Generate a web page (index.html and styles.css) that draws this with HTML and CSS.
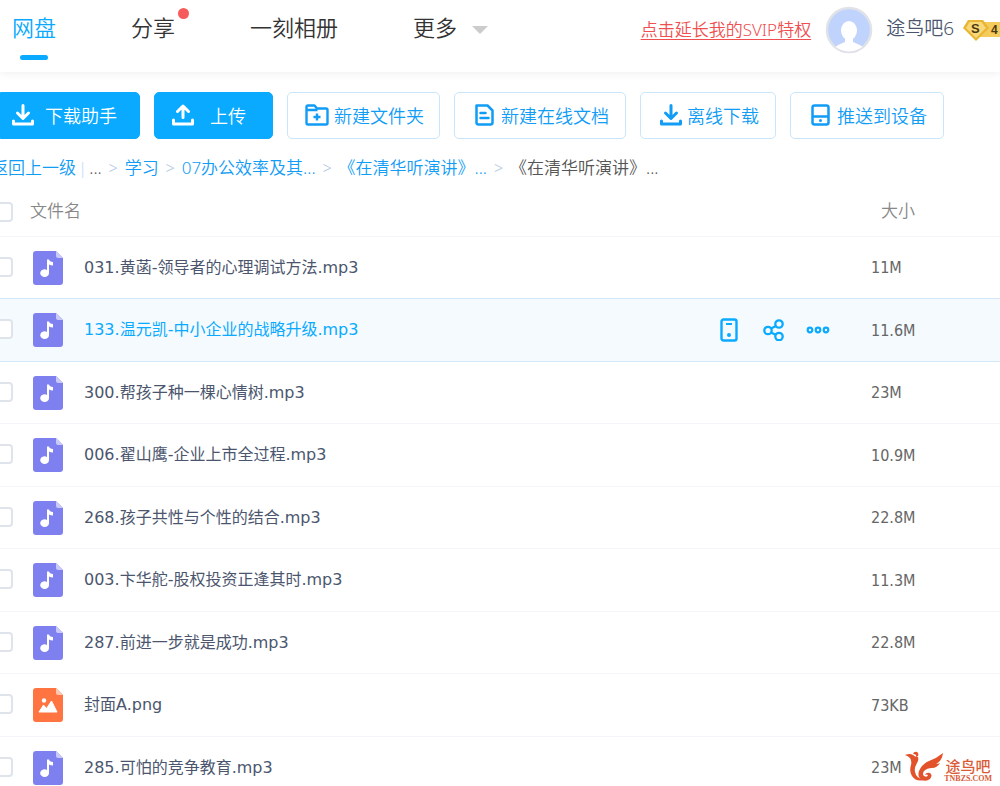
FILE: index.html
```html
<!DOCTYPE html>
<html lang="zh-CN">
<head>
<meta charset="utf-8">
<title>网盘</title>
<link rel="stylesheet" href="styles.css">
</head>
<body>
<svg class="defs" aria-hidden="true">
  <symbol id="music" viewBox="0 0 30 34">
    <path d="M3 0H23L30 7V31a3 3 0 0 1-3 3H3a3 3 0 0 1-3-3V3a3 3 0 0 1 3-3Z" fill="#7f80f0"/>
    <path d="M23 0l7 7h-5a2 2 0 0 1-2-2Z" fill="#c9c9fa"/>
    <path d="M14 8.500h2q.5 2 4 2.500v3.500q-2.500 0-4-1V22a4.400 3.800 0 1 1-2-3Z" fill="#fff"/>
  </symbol>
  <symbol id="picture" viewBox="0 0 30 34">
    <path d="M3 0H23L30 7V31a3 3 0 0 1-3 3H3a3 3 0 0 1-3-3V3a3 3 0 0 1 3-3Z" fill="#ff7440"/>
    <path d="M23 0l7 7h-5a2 2 0 0 1-2-2Z" fill="#ffc6b0"/>
    <circle cx="11" cy="12.500" r="2.200" fill="#fff"/>
    <path d="M6 24l4.500-7 3 3.500L18.500 13 24 24Z" fill="#fff" stroke="#fff" stroke-linejoin="round"/>
  </symbol>
  <symbol id="download" viewBox="0 0 22 22">
    <path d="M11 1.500V14M5.500 9l5.500 5.500L16.500 9M1.500 17v3h19v-3" fill="none" stroke="currentColor" stroke-width="3" stroke-linecap="round" stroke-linejoin="round"/>
  </symbol>
</svg>
<header class="topbar">
  <nav class="nav">
    <a class="nav-item current" href="#">网盘</a>
    <a class="nav-item share" href="#">分享<span class="dot"></span></a>
    <a class="nav-item album" href="#">一刻相册</a>
    <a class="nav-item more" href="#">更多<span class="caret"></span></a>
  </nav>
  <div class="account">
    <a class="svip" href="#">点击延长我的SVIP特权</a>
    <svg class="avatar" viewBox="0 0 48 48" aria-hidden="true">
      <defs><clipPath id="face"><circle cx="24" cy="24" r="21.500"/></clipPath></defs>
      <circle cx="24" cy="24" r="22" fill="#bfd3fc" stroke="#dfe2e8" stroke-width="2.500"/>
      <g clip-path="url(#face)" fill="#fff">
        <ellipse cx="24" cy="24.500" rx="8" ry="9.500"/>
        <path d="M20 30v6q-6 2-11 6v6h30v-6q-5-4-11-6v-6Z"/>
      </g>
    </svg>
    <span class="user">途鸟吧6</span>
    <svg class="badge" viewBox="0 0 38 24" aria-hidden="true">
      <path d="M15 4h23v15H15Z" fill="#f5cb5c"/>
      <path d="M6 2h15l6 8-13 13L1 10Z" fill="#e9b534"/>
      <path d="M7.500 4h12l4.500 6-10 10L4 10Z" fill="#f8d878"/>
      <text x="9" y="15" class="badge-s">S</text>
      <text x="29" y="16" class="badge-n">4</text>
    </svg>
  </div>
</header>
<main>
  <div class="toolbar">
    <button class="btn solid helper"><svg class="ico"><use href="#download"/></svg>下载助手</button>
    <button class="btn solid upload"><svg class="ico" viewBox="0 0 22 22"><path d="M11 13.500V3M5.500 7.500L11 2l5.500 5.500M1.500 16v4h19v-4" fill="none" stroke="currentColor" stroke-width="3" stroke-linecap="round" stroke-linejoin="round"/></svg>上传</button>
    <button class="btn"><svg class="ico wide" viewBox="0 0 24 22"><path d="M1.500 18V3q0-1.500 1.500-1.500h6.500L12 4.500h9q1.500 0 1.500 1.500v13q0 1.500-1.500 1.500H3q-1.500 0-1.500-1.500ZM1.500 6h11M12 9.500v7M8.500 13h7" fill="none" stroke="currentColor" stroke-width="2.400" stroke-linejoin="round"/></svg>新建文件夹</button>
    <button class="btn doc"><svg class="ico narrow" viewBox="0 0 19 22"><path d="M1.500 1.500h11l5 5v12q0 2-2 2h-12q-2 0-2-2ZM5.500 9h5M5.500 14h8" fill="none" stroke="currentColor" stroke-width="2.500" stroke-linejoin="round" stroke-linecap="round"/></svg>新建在线文档</button>
    <button class="btn offline"><svg class="ico"><use href="#download"/></svg>离线下载</button>
    <button class="btn doc"><svg class="ico narrow" viewBox="0 0 19 22"><path d="M3.500 1.500h12q2 0 2 2v15q0 2-2 2h-12q-2 0-2-2v-15q0-2 2-2ZM1.500 12.500h16" fill="none" stroke="currentColor" stroke-width="2.500"/><circle cx="9.500" cy="16.500" r="1.500" fill="currentColor"/></svg>推送到设备</button>
  </div>
  <nav class="crumbs" aria-label="路径">
    <a class="back" href="#">返回上一级</a><span class="bar">|</span><span class="ell">...</span><span class="sep">&gt;</span><a href="#">学习</a><span class="sep">&gt;</span><a href="#">07办公效率及其...</a><span class="sep">&gt;</span><a href="#">《在清华听演讲》...</a><span class="sep">&gt;</span><span class="here">《在清华听演讲》...</span>
  </nav>
  <table class="files">
    <thead>
      <tr><th class="pick"><input type="checkbox" aria-label="全选"></th><th class="title">文件名</th><th class="size">大小</th></tr>
    </thead>
    <tbody>
      <tr><td class="pick"><input type="checkbox" id="f1"></td><td><div class="file"><svg class="type"><use href="#music"/></svg><label for="f1">031.黄菡-领导者的心理调试方法.mp3</label></div></td><td class="size">11M</td></tr>
      <tr class="active"><td class="pick"><input type="checkbox" id="f2"></td><td><div class="file"><svg class="type"><use href="#music"/></svg><label for="f2">133.温元凯-中小企业的战略升级.mp3</label>
        <div class="actions">
          <button class="act" aria-label="推送到设备"><svg width="18" height="24" viewBox="0 0 18 24"><rect x="1.500" y="1.500" width="15" height="21" rx="2" fill="none" stroke="currentColor" stroke-width="2.400"/><path d="M6 6h6" stroke="currentColor" stroke-width="2"/><circle cx="9" cy="17" r="2" fill="currentColor"/></svg></button>
          <button class="act" aria-label="分享"><svg width="22" height="22" viewBox="0 0 22 22" fill="none" stroke="currentColor" stroke-width="2.300"><circle cx="5" cy="11.500" r="3.700"/><circle cx="16" cy="5" r="3.700"/><circle cx="16" cy="17.500" r="3.700"/><path d="M8 9.500l5-2.500M8 13.500l5 2.500"/></svg></button>
          <button class="act" aria-label="更多"><svg width="24" height="8" viewBox="0 0 24 8" fill="none" stroke="currentColor" stroke-width="2.200"><circle cx="4" cy="4" r="2.300"/><circle cx="12" cy="4" r="2.300"/><circle cx="20" cy="4" r="2.300"/></svg></button>
        </div></div></td><td class="size">11.6M</td></tr>
      <tr><td class="pick"><input type="checkbox" id="f3"></td><td><div class="file"><svg class="type"><use href="#music"/></svg><label for="f3">300.帮孩子种一棵心情树.mp3</label></div></td><td class="size">23M</td></tr>
      <tr><td class="pick"><input type="checkbox" id="f4"></td><td><div class="file"><svg class="type"><use href="#music"/></svg><label for="f4">006.翟山鹰-企业上市全过程.mp3</label></div></td><td class="size">10.9M</td></tr>
      <tr><td class="pick"><input type="checkbox" id="f5"></td><td><div class="file"><svg class="type"><use href="#music"/></svg><label for="f5">268.孩子共性与个性的结合.mp3</label></div></td><td class="size">22.8M</td></tr>
      <tr><td class="pick"><input type="checkbox" id="f6"></td><td><div class="file"><svg class="type"><use href="#music"/></svg><label for="f6">003.卞华舵-股权投资正逢其时.mp3</label></div></td><td class="size">11.3M</td></tr>
      <tr><td class="pick"><input type="checkbox" id="f7"></td><td><div class="file"><svg class="type"><use href="#music"/></svg><label for="f7">287.前进一步就是成功.mp3</label></div></td><td class="size">22.8M</td></tr>
      <tr><td class="pick"><input type="checkbox" id="f8"></td><td><div class="file"><svg class="type"><use href="#picture"/></svg><label for="f8">封面A.png</label></div></td><td class="size">73KB</td></tr>
      <tr><td class="pick"><input type="checkbox" id="f9"></td><td><div class="file"><svg class="type"><use href="#music"/></svg><label for="f9">285.可怕的竞争教育.mp3</label></div></td><td class="size">23M</td></tr>
    </tbody>
  </table>
</main>
<div class="mark">
  <svg width="40" height="32" viewBox="0 0 40 32" aria-hidden="true" fill="#e2522b">
    <path d="M1 4q5-2 8 0 2 2 5 2 1 3-1 6-3 5-2 9 1 6 9 8-8 2-12-4-3-5-1-11 1-4-1-7-2-2-5-3Z"/>
    <path d="M9 3q1-3 4-2 2 1 1 4l-2 1q1-3-3-3Z"/>
    <path d="M39 2q-1 8-7 11 2 0 4-1-3 5-8 5-5 0-8 3-2 3 0 5 3 2 4-1-1-1-3 0 1-3 5-2 3 2 0 6-4 3-8 1-5-3-3-9 3-7 10-10 8-3 14-8Z"/>
  </svg>
  <div class="mark-text"><span class="mark-name">途鸟吧</span><span class="mark-url">TNBZS.COM</span></div>
</div>
</body>
</html>
```
FILE: styles.css
```css
* { box-sizing: border-box; }
body {
  margin: 0;
  height: 100vh;
  overflow: hidden;
  position: relative;
  background: #fff;
  color: #4b566e;
  font-family: "Noto Sans", "Noto Sans CJK SC", sans-serif;
  font-size: 16px;
  font-weight: 350;
}
a { color: inherit; text-decoration: none; }
button { font: inherit; cursor: pointer; }
.defs { display: none; }

.topbar {
  display: flex;
  justify-content: space-between;
  height: 72px;
  box-shadow: 0 2px 8px rgba(0, 0, 0, 0.06);
  white-space: nowrap;
}
.nav { display: flex; padding-left: 12px; font-size: 22px; line-height: 55px; color: #333; }
.nav-item { position: relative; margin-right: 75px; }
.current { color: #09aaff; }
.current::after {
  content: "";
  position: absolute;
  left: 8px;
  top: 55px;
  width: 28px;
  height: 5px;
  border-radius: 3px;
  background: #09aaff;
}
.dot {
  position: absolute;
  top: 8px;
  right: -14px;
  width: 11px;
  height: 11px;
  border-radius: 50%;
  background: #f75c5c;
}
.more { display: flex; align-items: center; height: 54px; gap: 15px; margin-right: 0; }
.caret { border: 8px solid transparent; border-top-color: #ccc; border-bottom-width: 0; margin-top: 6px; }
.account { display: flex; align-items: center; height: 60px; }
.svip { color: #ef4f50; font-size: 17px; margin-bottom: 4px; text-decoration: underline; text-underline-offset: 3px; }
.avatar { width: 48px; height: 48px; margin: 0 13px 0 14px; }
.user { font-size: 19px; line-height: 56px; margin-bottom: 4px; }
.badge { width: 38px; height: 24px; margin-left: 8px; }
.badge-s { font: bold 13px "Liberation Sans", sans-serif; fill: #4c3a10; }
.badge-n { font: bold 12px "Liberation Sans", sans-serif; fill: #4c3a10; }

.toolbar { display: flex; gap: 14px; padding-top: 20px; }
.btn {
  display: flex;
  align-items: center;
  gap: 5px;
  height: 47px;
  padding: 0 15px 2px 17px;
  border: 1px solid #c9e6fb;
  border-radius: 5px;
  background: #fff;
  color: #119cf5;
  font-size: 18px;
  white-space: nowrap;
}
.solid { background: #09aaff; border-color: #09aaff; color: #fff; }
.helper { border-radius: 0 5px 5px 0; padding: 0 22px 2px 11px; gap: 11px; }
.upload { padding: 0 26px 2px 17px; gap: 16px; }
.doc, .offline { padding-left: 20px; padding-right: 16px; }
.doc { gap: 7px; }
.offline { padding-left: 19px; }
.ico { width: 22px; height: 22px; flex: none; }
.wide { width: 24px; }
.narrow { width: 19px; }

.crumbs {
  display: flex;
  height: 58px;
  line-height: 58px;
  margin-left: -9px;
  color: #119cf5;
  font-size: 17px;
  white-space: nowrap;
}
.bar { color: #c4dbfe; margin: 0 2px; }
.ell, .here { color: #555; }
.sep { width: 23px; text-align: center; color: #b4cbe4; font-size: 16px; }

.files { width: 100%; border-collapse: separate; border-spacing: 0; table-layout: fixed; }
th { height: 39px; padding: 0 0 14px; text-align: left; font-weight: 350; color: #888; font-size: 17px; }
th.pick { padding-bottom: 9px; }
th.size { padding-left: 10px; }
th.pick, td.pick { width: 30px; }
td { height: 62px; padding: 0; border-top: 1px solid #f3f5f9; }
tr:nth-child(even) td { height: 63px; }
td.pick { padding-bottom: 2px; }
.size { width: 129px; color: #666; font-family: "DejaVu Sans Condensed", "Noto Sans CJK SC", sans-serif; }
th.size { color: #888; }
input[type="checkbox"] {
  appearance: none;
  display: block;
  width: 20px;
  height: 20px;
  margin: 0 0 0 -7px;
  border: 2px solid #dfe3ec;
  border-radius: 4px;
  background: #fff;
}
.file { display: flex; align-items: center; padding-left: 3px; font-family: "DejaVu Sans", "Noto Sans CJK SC", sans-serif; font-weight: 400; }
.file label { line-height: 24px; }
.type { width: 30px; height: 34px; margin-right: 21px; }
.active td { background: #f4fafe; }
.active td, .active + tr td { border-top-color: #d3e8fa; }
.active label { color: #09aaff; }
.actions { display: flex; align-items: center; margin-left: auto; margin-right: 41px; gap: 25px; }
.act { display: flex; align-items: center; padding: 0; border: 0; background: none; color: #09aaff; }
.act + .act + .act { margin-left: -4px; }

.mark { position: absolute; right: 8px; bottom: 3px; display: flex; align-items: flex-end; color: #d95a36; }
.mark-text { display: flex; flex-direction: column; align-items: center; }
.mark-name { font-size: 15px; line-height: 16px; font-weight: 500; }
.mark-url { font: bold 8px/9px "Liberation Serif", serif; }
```
